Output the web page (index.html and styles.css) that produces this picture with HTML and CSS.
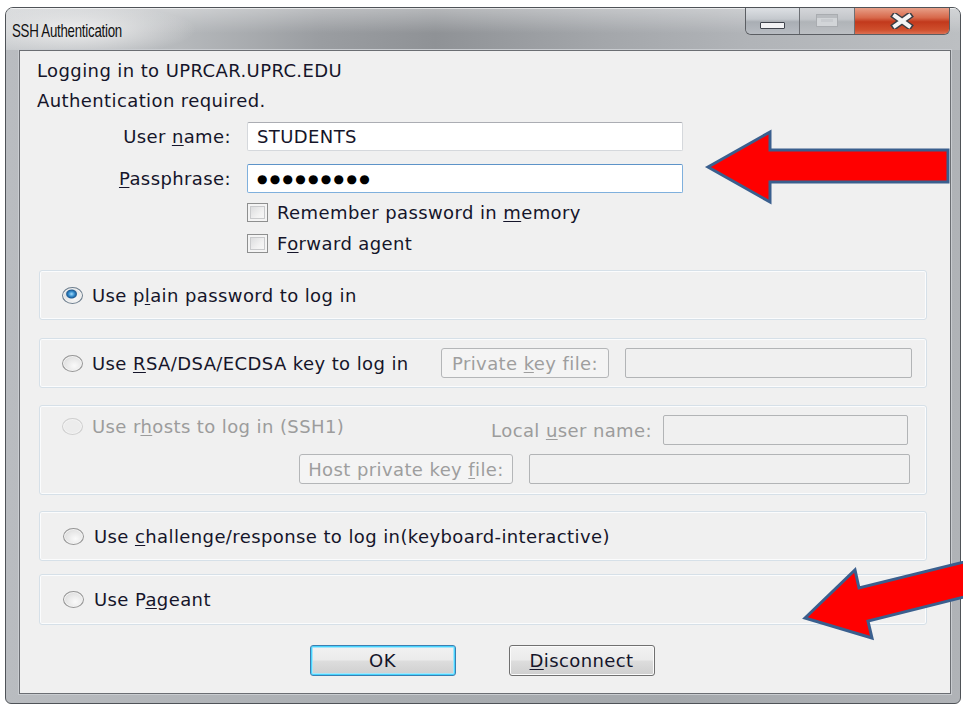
FILE: index.html
```html
<!DOCTYPE html>
<html lang="en">
<head>
<meta charset="utf-8">
<title>SSH Authentication</title>
<link rel="stylesheet" href="styles.css">
</head>
<body>
<div class="window">
  <div class="titlebar">
    <span class="title">SSH Authentication</span>
    <div class="caption">
      <span class="cbtn cbtn-min"><span class="glyph-min"></span></span>
      <span class="cbtn cbtn-max"><span class="glyph-max"></span></span>
      <span class="cbtn cbtn-close">
        <svg width="24" height="16" viewBox="0 0 24 16">
          <path d="M5 3 L19 13 M19 3 L5 13" stroke="#3a3d44" stroke-width="7" stroke-linecap="square" fill="none"/>
          <path d="M5 3 L19 13 M19 3 L5 13" stroke="#f4f4f4" stroke-width="4" stroke-linecap="square" fill="none"/>
        </svg>
      </span>
    </div>
  </div>
  <div class="frame">
    <div class="client">
      <p class="line">Logging in to UPRCAR.UPRC.EDU</p>
      <p class="line">Authentication required.</p>

      <div class="creds">
        <label class="lbl">User <u>n</u>ame:</label>
        <div class="field">STUDENTS</div>
        <label class="lbl"><u>P</u>assphrase:</label>
        <div class="field field-focus"><span class="dots">●●●●●●●●●</span></div>
      </div>

      <div class="checks">
        <div class="check"><span class="box"></span><span>Remember password in <u>m</u>emory</span></div>
        <div class="check"><span class="box"></span><span>F<u>o</u>rward agent</span></div>
      </div>

      <div class="group g-plain">
        <div class="opt"><span class="radio radio-on"></span><span>Use p<u>l</u>ain password to log in</span></div>
      </div>

      <div class="group g-key">
        <div class="opt"><span class="radio"></span><span>Use <u>R</u>SA/DSA/ECDSA key to log in</span></div>
        <span class="pbtn pbtn-key"><span>Private <u>k</u>ey file:</span></span>
        <span class="dfield dfield-key"></span>
      </div>

      <div class="group g-rhosts">
        <div class="grow">
          <div class="opt opt-off"><span class="radio radio-off"></span><span>Use r<u>h</u>osts to log in (SSH1)</span></div>
          <span class="dlabel">Local <u>u</u>ser name:</span>
          <span class="dfield dfield-user"></span>
        </div>
        <div class="grow grow-end">
          <span class="pbtn pbtn-host"><span>Host private key <u>f</u>ile:</span></span>
          <span class="dfield dfield-host"></span>
        </div>
      </div>

      <div class="group g-chal">
        <div class="opt opt-shift"><span class="radio"></span><span>Use <u>c</u>hallenge/response to log in(keyboard-interactive)</span></div>
      </div>

      <div class="group g-pageant">
        <div class="opt opt-shift"><span class="radio"></span><span>Use P<u>a</u>geant</span></div>
      </div>

      <div class="actions">
        <button class="btn btn-default">OK</button>
        <button class="btn"><u>D</u>isconnect</button>
      </div>
    </div>
  </div>
</div>

<svg class="callouts" width="963" height="705" viewBox="0 0 963 705">
  <polygon points="708,167 770,132 770,150 948,150 948,182 770,182 770,202"
           fill="#ff0000" stroke="#3a5f8e" stroke-width="3" stroke-linejoin="miter"/>
  <polygon points="805,618 855,570 859,588 1000,553 1000,588 868,621 872,638"
           fill="#ff0000" stroke="#3a5f8e" stroke-width="3" stroke-linejoin="miter"/>
</svg>
</body>
</html>
```

FILE: styles.css
```css
* { box-sizing: border-box; }

html, body {
  margin: 0;
  background: #ffffff;
}

body {
  position: relative;
  width: 963px;
  height: 705px;
  overflow: hidden;
  font-family: "DejaVu Sans", "Liberation Sans", sans-serif;
  font-size: 18px;
  letter-spacing: 0.4px;
  color: #15152a;
}

u { text-decoration-thickness: 1px; text-underline-offset: 2px; }

/* ---------- window chrome ---------- */
.window {
  margin: 7px 0 0 5px;
  width: 956px;
  height: 697px;
  border: 1px solid #4f5358;
  border-radius: 8px 8px 6px 6px;
  background: linear-gradient(90deg, #b9bcc0 0%, #a9adb1 40%, #a4a8ac 70%, #b0b3b7 100%);
  display: flex;
  flex-direction: column;
  overflow: hidden;
}

.titlebar {
  height: 42px;
  display: flex;
  align-items: center;
  justify-content: space-between;
  background:
    radial-gradient(ellipse 120px 26px at 70px 22px, rgba(240,240,240,0.95), rgba(240,240,240,0) 100%),
    linear-gradient(180deg, rgba(255,255,255,0.35), rgba(255,255,255,0) 60%),
    linear-gradient(90deg, #c7cacd 0%, #b6b9bc 18%, #9a9da1 33%, #8f9296 45%, #a3a6aa 62%, #b1b4b8 78%, #bcbfc2 100%);
  box-shadow: inset 0 1px 0 rgba(255,255,255,0.6);
}

/* caption font is tall and condensed */
.title {
  margin-left: 6px;
  font-family: "Liberation Sans", sans-serif;
  font-size: 16px;
  letter-spacing: -0.3px;
  color: #111;
  margin-top: 3px;
  display: inline-block;
  white-space: nowrap;
  transform: scale(0.83, 1.12);
  transform-origin: left center;
}

.caption {
  align-self: flex-start;
  margin-top: -1px;
  margin-right: 10px;
  display: flex;
  height: 28px;
  border: 1px solid #5b5e63;
  border-top: none;
  border-radius: 0 0 6px 6px;
  overflow: hidden;
}

.cbtn {
  display: flex;
  align-items: center;
  justify-content: center;
  height: 100%;
}

.cbtn-min {
  width: 54px;
  background: linear-gradient(180deg, #dfe2e6 0%, #c4c8cd 45%, #a9aeb4 55%, #b8bcc2 100%);
  border-right: 1px solid #6d7075;
}

.cbtn-max {
  width: 55px;
  background: linear-gradient(180deg, #d6d8db 0%, #c3c6ca 45%, #b0b4b8 55%, #bcbfc3 100%);
  border-right: 1px solid #6d7075;
}

.cbtn-close {
  width: 94px;
  background: linear-gradient(180deg, #e9a58f 0%, #d7684a 40%, #c2391c 55%, #cf4f2d 85%, #dc7053 100%);
}

.glyph-min {
  width: 25px;
  height: 7px;
  margin-top: 9px;
  background: #f2f2f4;
  border: 1px solid #3f434c;
  border-radius: 1px;
}

.glyph-max {
  width: 22px;
  height: 13px;
  border: 1px solid #a9acb0;
  background: #c8cbcf;
  box-shadow: inset 0 3px 0 #b9bcc0, inset 0 0 0 4px #d2d5d8;
}

.frame {
  flex: 1;
  padding: 0 9px 9px 13px;
  display: flex;
}

/* ---------- dialog body ---------- */
.client {
  flex: 1;
  background: #f0f0f0;
  border: 1px solid #6b6e73;
  box-shadow: 0 0 0 1px #c9ccd0;
  padding: 5px 23px 0 17px;
}

.line {
  margin: 0;
  height: 30px;
  line-height: 30px;
  white-space: nowrap;
}

.creds {
  margin-top: 6px;
  display: grid;
  grid-template-columns: 194px 436px;
  grid-template-rows: 29px 29px;
  column-gap: 16px;
  row-gap: 13px;
  align-items: center;
}

.lbl {
  text-align: right;
  white-space: nowrap;
}

.field {
  height: 29px;
  background: #ffffff;
  border: 1px solid #d5d8dc;
  border-top-color: #abadb3;
  border-radius: 2px;
  padding-left: 9px;
  display: flex;
  align-items: center;
}

.field-focus {
  border-color: #7fb0dd;
  border-top-color: #5d93c8;
}

.dots {
  font-size: 12px;
  letter-spacing: 2.3px;
  color: #000;
}

.checks {
  margin: 4px 0 0 210px;
}

.check {
  height: 31px;
  display: flex;
  align-items: center;
  gap: 9px;
  white-space: nowrap;
}

.box {
  width: 21px;
  height: 19px;
  border: 1px solid #8e8f8f;
  background: linear-gradient(135deg, #d4d5d7 0%, #f2f2f2 60%, #fbfbfb 100%);
  box-shadow: inset 0 0 0 2px #f4f4f4, inset 0 0 0 3px #c9cacc;
}

/* ---------- option groups ---------- */
.group {
  margin-left: 2px;
  border: 1px solid #d6e0e8;
  border-radius: 3px;
  box-shadow: inset 0 0 0 1px #fbfcfd;
  display: flex;
  align-items: center;
}

.g-plain { margin-top: 11px; height: 50px; }
.g-key { margin-top: 18px; height: 50px; padding-right: 14px; }
.g-rhosts {
  margin-top: 17px;
  height: 90px;
  flex-direction: column;
  align-items: stretch;
  justify-content: flex-start;
  gap: 9px;
  padding: 9px 16px 0 0;
}
.g-chal { margin-top: 16px; height: 50px; }
.g-pageant { margin-top: 13px; height: 51px; }

.opt {
  flex: 1;
  display: flex;
  align-items: center;
  gap: 9px;
  padding-left: 22px;
  white-space: nowrap;
}

.opt-shift { padding-left: 23px; gap: 10px; }

.opt-off { color: #9c9c9c; align-self: flex-start; margin-top: 1px; }

.radio {
  width: 21px;
  height: 17px;
  border-radius: 50%;
  border: 1px solid #969696;
  background: radial-gradient(ellipse at 60% 65%, #fafafa 0%, #e6e6e6 55%, #cfcfcf 100%);
  box-shadow: inset 0 0 0 1px #f3f3f3;
  flex: none;
}

.radio-on {
  border-color: #6d7e8e;
  background:
    radial-gradient(ellipse 6px 5px at 45% 40%, #a6dcfa 0%, #3b93d3 45%, #1b5a93 80%, rgba(27,90,147,0) 100%),
    radial-gradient(ellipse at 60% 65%, #fafafa 0%, #e6e6e6 55%, #cfcfcf 100%);
  background-repeat: no-repeat;
}

.radio-off {
  border-color: #cfcfcf;
  background: #ececec;
}

.pbtn {
  height: 30px;
  display: flex;
  align-items: center;
  justify-content: center;
  border: 1px solid #b4b6b8;
  border-radius: 3px;
  background: #f4f4f4;
  color: #9e9e9e;
  white-space: nowrap;
  flex: none;
}

.pbtn-key { width: 168px; }
.pbtn-host { width: 214px; }

.dfield {
  height: 30px;
  border: 1px solid #b2b4b6;
  border-radius: 2px;
  background: #f0f0f0;
  flex: none;
}

.dfield-key { width: 287px; margin-left: 16px; }
.dfield-user { width: 245px; margin-left: 11px; }
.dfield-host { width: 381px; margin-left: 16px; }

.grow {
  display: flex;
  align-items: center;
  height: 30px;
}

.grow-end { justify-content: flex-end; }

.g-rhosts .grow:first-child { padding-right: 2px; }

.dlabel {
  color: #9c9c9c;
  white-space: nowrap;
}

/* ---------- buttons ---------- */
.actions {
  margin-top: 20px;
  display: flex;
  justify-content: center;
  gap: 53px;
}

.btn {
  width: 146px;
  height: 31px;
  font: inherit;
  letter-spacing: inherit;
  color: #15152a;
  border: 1px solid #707070;
  border-radius: 3px;
  background: linear-gradient(180deg, #f2f2f2 0%, #ebebeb 48%, #dddddd 52%, #cfcfcf 100%);
  box-shadow: inset 0 0 0 1px #fbfbfb;
  padding: 0;
}

.btn-default {
  border-color: #3c7fb1;
  box-shadow: inset 0 0 0 1px #48d4fe, inset 0 0 0 2px #a6e5fa;
}

/* ---------- annotation arrows ---------- */
.callouts {
  position: absolute;
  left: 0;
  top: 0;
  pointer-events: none;
}
```
